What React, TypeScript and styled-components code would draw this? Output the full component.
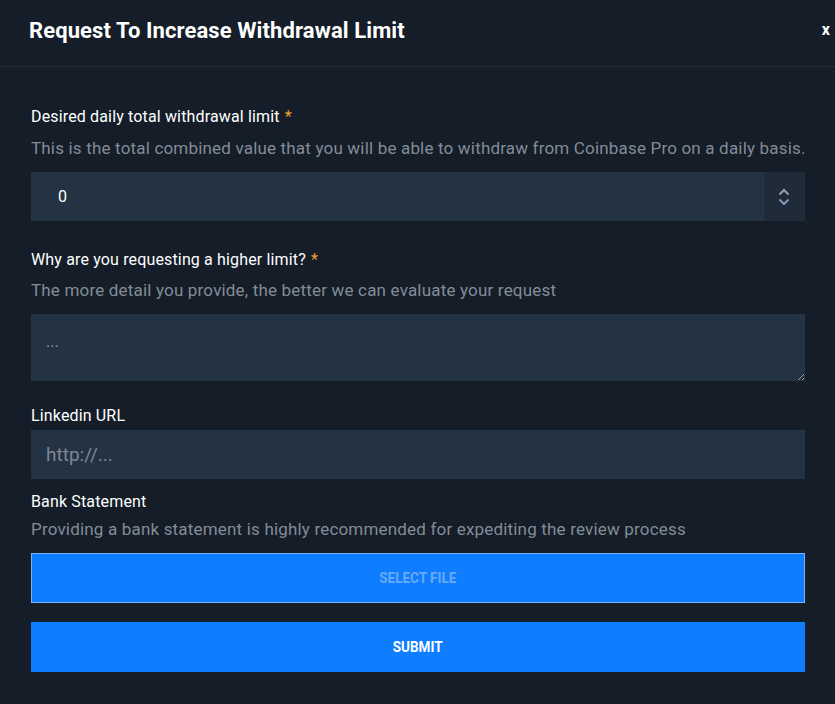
import React from "react";
import styled, { createGlobalStyle } from "styled-components";

const Global = createGlobalStyle`
  html, body { margin: 0; padding: 0; background: #141d28; }
  * { box-sizing: border-box; }
`;

const Modal = styled.div`
  width: 835px;
  height: 704px;
  background: #141d28;
  font-family: Roboto, "Liberation Sans", sans-serif;
  color: #ffffff;
  overflow: hidden;
`;

const Header = styled.div`
  height: 67px;
  display: flex;
  align-items: center;
  justify-content: space-between;
  padding: 0 5px 6px 29px;
  border-bottom: 1px solid #232d39;
`;

const Title = styled.h1`
  margin: 0;
  font-family: Roboto, "Liberation Sans", sans-serif;
  font-weight: 700;
  font-size: 22px;
  letter-spacing: 0.1px;
  color: #ffffff;
`;

const Close = styled.button`
  border: 0;
  background: none;
  color: #ffffff;
  font-family: Roboto, "Liberation Sans", sans-serif;
  font-weight: 700;
  font-size: 16px;
  padding: 0;
  line-height: 1;
  cursor: pointer;
`;

const Form = styled.form`
  padding: 40px 30px 0 31px;
  display: flex;
  flex-direction: column;
`;

const Field = styled.div<{ $mt: number }>`
  display: flex;
  flex-direction: column;
  margin-top: ${(p) => p.$mt}px;
`;

const Label = styled.label`
  font-size: 16px;
  letter-spacing: 0.15px;
  line-height: 20px;
  color: #ffffff;
  font-weight: 400;
`;

const Star = styled.span`
  color: #f0a030;
  margin-left: 5px;
`;

const Description = styled.div<{ $mt: number }>`
  margin-top: ${(p) => p.$mt}px;
  font-size: 17px;
  letter-spacing: 0.18px;
  line-height: 20px;
  color: #838c97;
  white-space: nowrap;
`;

const Control = styled.div<{ $mt: number }>`
  margin-top: ${(p) => p.$mt}px;
`;

const NumberBox = styled.div`
  height: 49px;
  background: #243343;
  display: flex;
  align-items: stretch;
`;

const NumberValue = styled.div`
  flex: 1;
  display: flex;
  align-items: center;
  padding-left: 27px;
  font-size: 16px;
  color: #ffffff;
`;

const Spinner = styled.div`
  width: 40px;
  background: #1f2b38;
  border-left: 1px solid #1c2733;
  display: flex;
  align-items: center;
  justify-content: center;
  padding-right: 4px;
`;

const TextArea = styled.textarea`
  display: block;
  width: 100%;
  height: 67px;
  background: #243343;
  border: 0;
  outline: none;
  padding: 18px 15px;
  font-family: Roboto, "Liberation Sans", sans-serif;
  font-size: 16px;
  color: #ffffff;
  resize: vertical;
  color-scheme: dark;
  &::placeholder { color: #8a939e; }
`;

const TextInput = styled.input`
  display: block;
  width: 100%;
  height: 49px;
  background: #243343;
  border: 0;
  outline: none;
  padding: 0 15px;
  font-family: Roboto, "Liberation Sans", sans-serif;
  font-size: 19px;
  color: #ffffff;
  &::placeholder { color: #7d8692; }
`;

const Button = styled.button<{ $outlined?: boolean; $mt: number }>`
  margin-top: ${(p) => p.$mt}px;
  height: 50px;
  width: 100%;
  background: #0e7dff;
  border: ${(p) => (p.$outlined ? "1px solid #7ab2f5" : "0")};
  color: ${(p) => (p.$outlined ? "#69a9f6" : "#ffffff")};
  font-family: Roboto, "Liberation Sans", sans-serif;
  font-weight: 700;
  font-size: 15px;
  text-transform: uppercase;
  cursor: pointer;
`;

const ButtonText = styled.span`
  display: inline-block;
  transform: scaleX(0.9);
`;

export default function App() {
  return (
    <Modal>
      <Global />
      <Header>
        <Title>Request To Increase Withdrawal Limit</Title>
        <Close type="button">x</Close>
      </Header>
      <Form onSubmit={(e) => e.preventDefault()}>
        <Field $mt={0}>
          <Label>
            Desired daily total withdrawal limit<Star>*</Star>
          </Label>
          <Description $mt={11}>
            This is the total combined value that you will be able to withdraw from Coinbase Pro on a daily basis.
          </Description>
          <Control $mt={14}>
            <NumberBox>
              <NumberValue>0</NumberValue>
              <Spinner>
                <svg width="14" height="24" viewBox="0 0 14 24" fill="none">
                  <path d="M2.5 9.5 L7 5 L11.5 9.5" stroke="#98a09c" strokeWidth="2" />
                  <path d="M2.5 14.5 L7 19 L11.5 14.5" stroke="#7f9ab8" strokeWidth="2" />
                </svg>
              </Spinner>
            </NumberBox>
          </Control>
        </Field>
        <Field $mt={29}>
          <Label>
            Why are you requesting a higher limit?<Star>*</Star>
          </Label>
          <Description $mt={10}>
            The more detail you provide, the better we can evaluate your request
          </Description>
          <Control $mt={14}>
            <TextArea placeholder="..." />
          </Control>
        </Field>
        <Field $mt={25}>
          <Label>Linkedin URL</Label>
          <Control $mt={4}>
            <TextInput placeholder="http://..." />
          </Control>
        </Field>
        <Field $mt={13}>
          <Label>Bank Statement</Label>
          <Description $mt={7}>
            Providing a bank statement is highly recommended for expediting the review process
          </Description>
          <Button type="button" $outlined $mt={14}>
            <ButtonText>Select File</ButtonText>
          </Button>
        </Field>
        <Button type="submit" $mt={19}>
          <ButtonText>Submit</ButtonText>
        </Button>
      </Form>
    </Modal>
  );
}
